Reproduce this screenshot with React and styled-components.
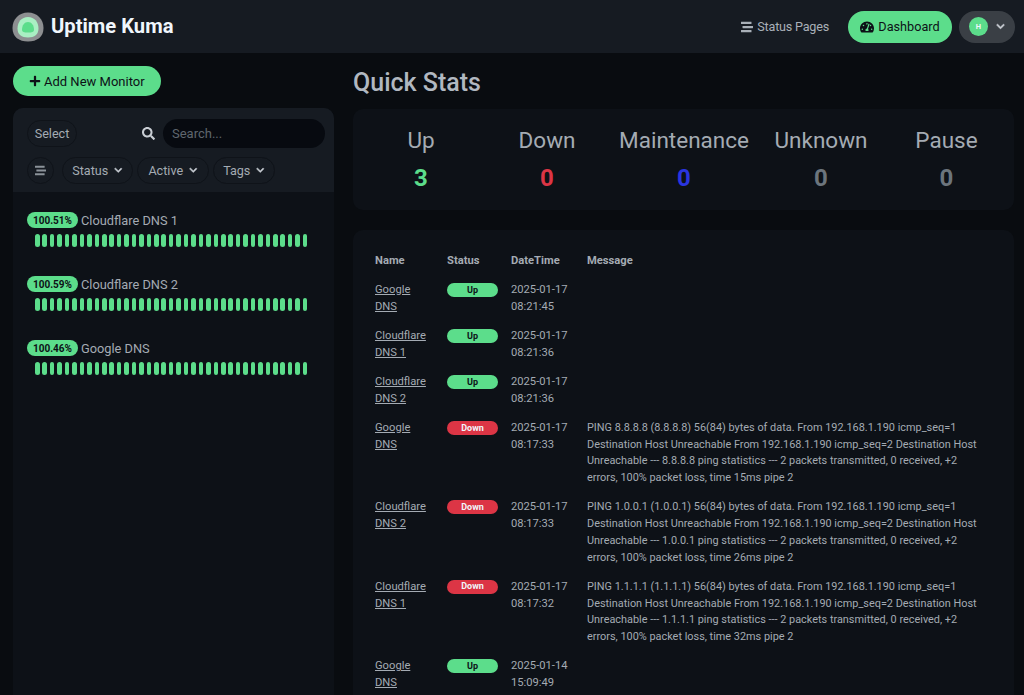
import React from "react";
import styled, { createGlobalStyle } from "styled-components";
import { FaStream, FaTachometerAlt, FaChevronDown, FaPlus, FaSearch } from "react-icons/fa";

const Global = createGlobalStyle`
  html, body { margin: 0; padding: 0; height: 695px; overflow: hidden; background: #090c10; }
  body { font-family: Roboto, "Noto Sans", sans-serif; font-size: 13px; color: #b1b8c0; }
  * { box-sizing: border-box; }
`;

const Page = styled.div`height: 695px; overflow: hidden; display: flex; flex-direction: column;`;
const Header = styled.header`
  height: 53px; flex: none; background: #161b22; display: flex; align-items: center;
  padding: 0 9px 0 12px;
`;
const Brand = styled.div`display: flex; align-items: center; gap: 7px; flex: 1;`;
const BrandName = styled.span`font-size: 20.2px; font-weight: 700; color: #f0f6fc; line-height: 1;`;
const NavLink = styled.div`
  display: flex; align-items: center; gap: 4px; font-size: 12.6px; letter-spacing: -0.2px; color: #a9b0b8; margin-right: 19px;
  svg { font-size: 12px; }
`;
const DashButton = styled.div`
  display: flex; align-items: center; justify-content: center; gap: 4px; height: 32px; width: 104px; border-radius: 16px;
  background: #5cdd8b; color: #0d1117; font-size: 12.7px; margin-right: 7px;
  svg { font-size: 14px; }
`;
const Profile = styled.div`
  display: flex; align-items: center; height: 32px; width: 56px; padding-left: 10px; gap: 8px; border-radius: 16px;
  background: #3a3f45; color: #c9ced4;
  svg { font-size: 9px; stroke: currentColor; stroke-width: 30px; }
`;
const Avatar = styled.div`
  width: 19px; height: 19px; border-radius: 50%; background: #5cdd8b; color: #f0f6fc; font-size: 7.5px; font-weight: 700;
  display: flex; align-items: center; justify-content: center;
`;
const Main = styled.main`
  flex: 1; min-height: 0; display: grid; grid-template-columns: 321px 661px; column-gap: 19px; padding: 13px 0 0 13px;
`;
const LeftCol = styled.div`display: flex; flex-direction: column; min-height: 0;`;
const AddButton = styled.div`
  align-self: flex-start; display: flex; align-items: center; gap: 3px; width: 148px; height: 30px; border-radius: 15px;
  padding-left: 16px; background: #5cdd8b; color: #0d1117; font-size: 13px;
  svg { font-size: 12px; }
`;
const ListCard = styled.section`
  margin-top: 12px; flex: 1; background: #0d1117; border-radius: 10px 10px 0 0; overflow: hidden;
`;
const FilterHead = styled.div`
  height: 84px; background: #161b22; padding: 11px 9px 0 14px; display: flex; flex-direction: column; gap: 9px;
`;
const FilterTop = styled.div`display: flex; align-items: center; justify-content: space-between;`;
const Pill = styled.div`
  display: inline-flex; align-items: center; justify-content: center; gap: 6px; height: 27px; border-radius: 14px;
  width: ${p => p.$w}; border: 1px solid #0f1319; background: #161b22; color: #a4abb3; font-size: 12.6px;
  svg { font-size: 8.5px; color: #c9ced4; stroke: currentColor; stroke-width: 30px; }
`;
const SearchWrap = styled.div`display: flex; align-items: center; gap: 8px; svg { font-size: 13px; color: #c9ced4; }`;
const SearchBox = styled.div`
  width: 162px; height: 29px; border-radius: 15px; background: #070a10; color: #5f666e; font-size: 13px;
  display: flex; align-items: center; padding-left: 9px;
`;
const FilterRow = styled.div`display: flex; align-items: center; gap: 4px;`;
const IconPill = styled(Pill)`margin-right: 4px; svg { font-size: 11px; color: #8b9299; stroke-width: 0; }`;
const Monitors = styled.div`padding: 20px 14px 0;`;
const Monitor = styled.div`height: 64px;`;
const MonitorTop = styled.div`display: flex; align-items: center; gap: 3px; height: 16px;`;
const UptimeBadge = styled.span`
  width: 51px; height: 16px; border-radius: 8px; background: #5cdd8b; color: #0d1117; font-size: 10px; font-weight: 700;
  display: flex; align-items: center; justify-content: center;
`;
const MonitorName = styled.span`font-size: 12.8px; color: #a4abb3;`;
const Beats = styled.div`display: flex; gap: 2.85px; margin: 5.5px 0 0 8px;`;
const Beat = styled.i`display: block; width: 4.6px; height: 13px; border-radius: 3px; background: #5cdd8b;`;
const RightCol = styled.div`display: flex; flex-direction: column; min-height: 0;`;
const Title = styled.h1`
  margin: 0; padding-top: 2px; font-size: 25px; font-weight: 500; color: #b1b8c0; line-height: 30px; height: 43px;
`;
const StatsCard = styled.section`
  height: 101px; background: #0d1117; border-radius: 10px; display: grid;
  grid-template-columns: 136px 116px 158px 116px 135px; align-items: start;
`;
const Stat = styled.div`display: flex; flex-direction: column; align-items: center; padding-top: 15px;`;
const StatLabel = styled.div`font-size: 22.5px; color: #a4abb3; line-height: 32px;`;
const StatValue = styled.div`
  font-size: 24px; font-weight: 700; line-height: 32px; margin-top: 6px; color: ${p => p.$c};
`;
const LogCard = styled.section`
  margin-top: 20px; flex: 1; background: #0d1117; border-radius: 10px 10px 0 0; padding: 21px 22px 0; overflow: hidden;
`;
const Table = styled.table`border-collapse: collapse; width: 100%; table-layout: fixed; font-size: 11.2px; color: #a4abb3;`;
const Th = styled.th`
  text-align: left; font-weight: 700; font-size: 11.2px; line-height: 20px; padding: 0 0 11px; color: #a4abb3; width: ${p => p.$w};
`;
const Td = styled.td`vertical-align: top; padding: 0 8px 12.6px 0; line-height: 16.7px;`;
const NameCell = styled(Td)`padding-right: 18px;`;
const MessageCell = styled(Td)`font-size: 10.9px;`;
const NameLink = styled.a`color: #a4abb3; text-decoration: underline;`;
const StatusBadge = styled.span`
  display: flex; align-items: center; justify-content: center; width: 51px; height: 14px; margin-top: 1px; border-radius: 7px;
  font-size: 9px; font-weight: 700; background: ${p => p.$up ? "#5cdd8b" : "#dc3545"}; color: ${p => p.$up ? "#0d1117" : "#f0f6fc"};
`;

const Logo = () => (
  <svg width="32" height="30" viewBox="0 0 32 30">
    <path d="M16 0.5C25 0.5 31.5 7 31.5 16C31.5 25 25 29.5 16 29.5C7 29.5 0.5 25 0.5 16C0.5 7 7 0.5 16 0.5Z" fill="#8d8f91" />
    <path d="M16 5C22.5 5 26.5 10 26.5 16.5C26.5 22.5 22.5 25.5 16 25.5C9.5 25.5 5.5 22.5 5.5 16.5C5.5 10 9.5 5 16 5Z" fill="#a9efc3" />
    <path d="M16 10C19.5 10 22 13 22 18C22 20 20 20.5 16 20.5C12 20.5 10 20 10 18C10 13 12.5 10 16 10Z" fill="#5cdd8b" />
  </svg>
);

const monitors = [
  ["100.51%", "Cloudflare DNS 1"],
  ["100.59%", "Cloudflare DNS 2"],
  ["100.46%", "Google DNS"],
];
const stats = [
  ["Up", "3", "#5cdd8b"], ["Down", "0", "#dc3545"], ["Maintenance", "0", "#2a35e0"], ["Unknown", "0", "#6c757d"], ["Pause", "0", "#6c757d"],
];
const err = (a, t) => `PING ${a} (${a}) 56(84) bytes of data. From 192.168.1.190 icmp_seq=1 Destination Host Unreachable From 192.168.1.190 icmp_seq=2 Destination Host Unreachable --- ${a} ping statistics --- 2 packets transmitted, 0 received, +2 errors, 100% packet loss, time ${t}ms pipe 2`;
const rows = [
  ["Google DNS", true, "2025-01-17 08:21:45", ""],
  ["Cloudflare DNS 1", true, "2025-01-17 08:21:36", ""],
  ["Cloudflare DNS 2", true, "2025-01-17 08:21:36", ""],
  ["Google DNS", false, "2025-01-17 08:17:33", err("8.8.8.8", 15)],
  ["Cloudflare DNS 2", false, "2025-01-17 08:17:33", err("1.0.0.1", 26)],
  ["Cloudflare DNS 1", false, "2025-01-17 08:17:32", err("1.1.1.1", 32)],
  ["Google DNS", true, "2025-01-14 15:09:49", ""],
];

export default function App() {
  return (
    <Page>
      <Global />
      <Header>
        <Brand><Logo /><BrandName>Uptime Kuma</BrandName></Brand>
        <NavLink><FaStream />Status Pages</NavLink>
        <DashButton><FaTachometerAlt />Dashboard</DashButton>
        <Profile><Avatar>H</Avatar><FaChevronDown /></Profile>
      </Header>
      <Main>
        <LeftCol>
          <AddButton><FaPlus />Add New Monitor</AddButton>
          <ListCard>
            <FilterHead>
              <FilterTop>
                <Pill $w="50px">Select</Pill>
                <SearchWrap><FaSearch /><SearchBox>Search...</SearchBox></SearchWrap>
              </FilterTop>
              <FilterRow>
                <IconPill $w="27px"><FaStream /></IconPill>
                <Pill $w="71px">Status <FaChevronDown /></Pill>
                <Pill $w="72px">Active <FaChevronDown /></Pill>
                <Pill $w="62px">Tags <FaChevronDown /></Pill>
              </FilterRow>
            </FilterHead>
            <Monitors>
              {monitors.map(([u, n]) => (
                <Monitor key={n}>
                  <MonitorTop><UptimeBadge>{u}</UptimeBadge><MonitorName>{n}</MonitorName></MonitorTop>
                  <Beats>{Array.from({ length: 37 }, (_, i) => <Beat key={i} />)}</Beats>
                </Monitor>
              ))}
            </Monitors>
          </ListCard>
        </LeftCol>
        <RightCol>
          <Title>Quick Stats</Title>
          <StatsCard>
            {stats.map(([l, v, c]) => (
              <Stat key={l}><StatLabel>{l}</StatLabel><StatValue $c={c}>{v}</StatValue></Stat>
            ))}
          </StatsCard>
          <LogCard>
            <Table>
              <thead>
                <tr><Th $w="72px">Name</Th><Th $w="64px">Status</Th><Th $w="76px">DateTime</Th><Th>Message</Th></tr>
              </thead>
              <tbody>
                {rows.map((r, i) => (
                  <tr key={i}>
                    <NameCell><NameLink>{r[0]}</NameLink></NameCell>
                    <Td><StatusBadge $up={r[1]}>{r[1] ? "Up" : "Down"}</StatusBadge></Td>
                    <Td>{r[2]}</Td>
                    <MessageCell>{r[3]}</MessageCell>
                  </tr>
                ))}
              </tbody>
            </Table>
          </LogCard>
        </RightCol>
      </Main>
    </Page>
  );
}
